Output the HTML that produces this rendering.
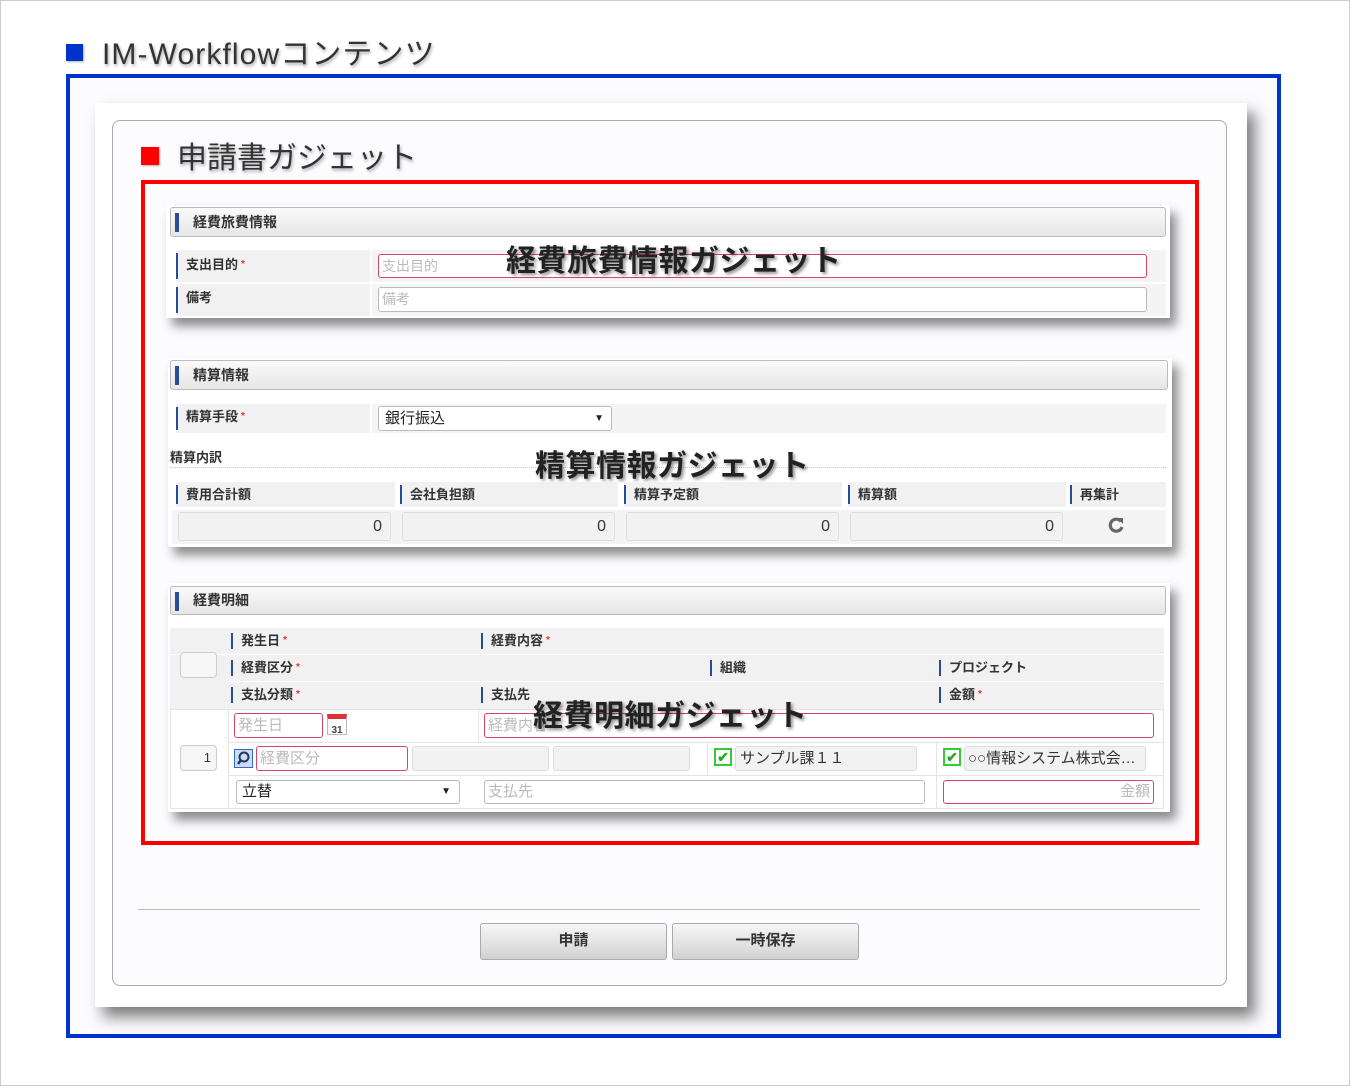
<!DOCTYPE html>
<html><head><meta charset="utf-8"><style>
*{box-sizing:border-box;margin:0;padding:0}
body{width:1350px;height:1086px;position:relative;background:#fff;font-family:"Liberation Sans","Noto Sans CJK JP",sans-serif;color:#333;overflow:hidden}
.a{position:absolute}
.hd{position:absolute;border:1px solid #bbb;border-radius:3px;background:linear-gradient(#fafafa,#e6e6e6);font-size:14px;font-weight:bold;color:#333;line-height:28px;padding-left:22px}
.hd:before{content:"";position:absolute;left:4px;top:5px;width:4px;height:19px;background:#2a4a9a}
.lb{position:absolute;background:#f1f1f1;font-size:13px;font-weight:bold;color:#333;padding-left:10px}
.lb:before{content:"";position:absolute;left:0;top:3px;bottom:3px;width:2px;background:#2a4a9a}
.req{color:#e33;font-size:10px;vertical-align:top;margin-left:3px}
.cell{position:absolute;background:#f4f4f4}
.in{position:absolute;background:#fff;border:1px solid #bbb;border-radius:3px;font-size:14px;color:#bbb;padding-left:3px}
.rq{border-color:#d9436a}
.ro{position:absolute;background:#f2f2f2;border:1px solid #ddd;border-radius:3px;font-size:16px;color:#333;text-align:right;padding-right:8px}
.big{position:absolute;font-size:30px;font-weight:bold;color:#222;text-shadow:2px 2px 3px rgba(0,0,0,.45);white-space:nowrap;letter-spacing:0.5px}
.gad{position:absolute;background:#fff;box-shadow:6px 8px 10px rgba(0,0,0,.45)}
.btn{position:absolute;border:1px solid #aaa;border-radius:3px;background:linear-gradient(#f6f6f6,#d2d2d2);font-size:15px;font-weight:bold;text-align:center;line-height:34px;color:#333}
.ck{display:inline-block;width:18px;height:18px;border:2px solid #3c3;background:#fff;color:#2a2;font-size:14px;line-height:14px;text-align:center;vertical-align:middle;font-weight:bold}
</style></head><body>
<div class="a" style="left:0;top:0;width:1350px;height:1086px;border:1px solid #ccc"></div>
<div class="a" style="left:66px;top:44px;width:17px;height:17px;background:#0033cc;box-shadow:1px 1px 2px rgba(0,0,0,.3)"></div>
<div class="a" style="left:102px;top:29px;font-size:30px;color:#333;text-shadow:1px 2px 3px rgba(0,0,0,.35);white-space:nowrap;letter-spacing:1.1px">IM-Workflowコンテンツ</div>
<div class="a" style="left:66px;top:74px;width:1215px;height:964px;border:4px solid #0033cc;background:#fcfcfe"></div>
<div class="a" style="left:95px;top:103px;width:1152px;height:904px;background:#fff;box-shadow:8px 10px 14px rgba(0,0,0,.5)"></div>
<div class="a" style="left:112px;top:120px;width:1115px;height:866px;border:1px solid #aaa;border-radius:8px;background:#fcfcfe"></div>
<div class="a" style="left:141px;top:147px;width:18px;height:18px;background:#f00;box-shadow:1px 1px 2px rgba(0,0,0,.3)"></div>
<div class="a" style="left:177px;top:133px;font-size:30px;color:#333;text-shadow:1px 2px 3px rgba(0,0,0,.35);white-space:nowrap">申請書ガジェット</div>
<div class="a" style="left:141px;top:180px;width:1058px;height:665px;border:4px solid #f00"></div>

<!-- gadget 1 -->
<div class="gad" style="left:166px;top:205px;width:1004px;height:113px"></div>
<div class="hd" style="left:170px;top:207px;width:996px;height:30px">経費旅費情報</div>
<div class="lb" style="left:176px;top:250px;width:194px;height:32px;line-height:30px">支出目的<span class="req">*</span></div>
<div class="cell" style="left:372px;top:250px;width:794px;height:32px"></div>
<div class="in rq" style="left:378px;top:254px;width:769px;height:24px;line-height:22px">支出目的</div>
<div class="lb" style="left:176px;top:284px;width:194px;height:32px;line-height:28px">備考</div>
<div class="cell" style="left:372px;top:284px;width:794px;height:32px"></div>
<div class="in" style="left:378px;top:287px;width:769px;height:25px;line-height:22px">備考</div>
<div class="big" style="left:506px;top:236px">経費旅費情報ガジェット</div>

<!-- gadget 2 -->
<div class="gad" style="left:168px;top:358px;width:1004px;height:189px"></div>
<div class="hd" style="left:170px;top:360px;width:998px;height:30px">精算情報</div>
<div class="lb" style="left:176px;top:404px;width:194px;height:29px;line-height:26px">精算手段<span class="req">*</span></div>
<div class="cell" style="left:372px;top:404px;width:794px;height:29px"></div>
<div class="in" style="left:378px;top:406px;width:234px;height:25px;line-height:23px;color:#222;font-size:15px;padding-left:6px">銀行振込<span style="position:absolute;right:7px;font-size:10px">▼</span></div>
<div class="a" style="left:170px;top:447px;font-size:13px;font-weight:bold">精算内訳</div>
<div class="a" style="left:170px;top:467px;width:996px;border-top:1px dotted #ccc"></div>
<div class="big" style="left:535px;top:441px">精算情報ガジェット</div>
<div class="lb" style="left:176px;top:482px;width:219px;height:25px;line-height:25px">費用合計額</div>
<div class="lb" style="left:400px;top:482px;width:218px;height:25px;line-height:25px">会社負担額</div>
<div class="lb" style="left:624px;top:482px;width:218px;height:25px;line-height:25px">精算予定額</div>
<div class="lb" style="left:848px;top:482px;width:218px;height:25px;line-height:25px">精算額</div>
<div class="lb" style="left:1070px;top:482px;width:96px;height:25px;line-height:25px">再集計</div>
<div class="cell" style="left:172px;top:510px;width:994px;height:34px"></div>
<div class="ro" style="left:178px;top:512px;width:213px;height:29px;line-height:27px">0</div>
<div class="ro" style="left:402px;top:512px;width:213px;height:29px;line-height:27px">0</div>
<div class="ro" style="left:626px;top:512px;width:213px;height:29px;line-height:27px">0</div>
<div class="ro" style="left:850px;top:512px;width:213px;height:29px;line-height:27px">0</div>
<svg class="a" style="left:1107px;top:516px" width="18" height="18" viewBox="0 0 18 18"><path d="M14 5.5A6 6 0 1 0 15 11" fill="none" stroke="#666" stroke-width="3.2"/><path d="M10 2l6 0l0 6z" fill="#666"/></svg>

<!-- gadget 3 -->
<div class="gad" style="left:168px;top:583px;width:1002px;height:229px"></div>
<div class="hd" style="left:170px;top:586px;width:996px;height:29px;line-height:27px">経費明細</div>
<div class="cell" style="left:170px;top:628px;width:994px;height:81px;background:#f1f1f1"></div>
<div class="a" style="left:170px;top:654px;width:994px;border-top:1px solid #fff"></div>
<div class="a" style="left:228px;top:681px;width:936px;border-top:1px solid #fff"></div>
<div class="a" style="left:180px;top:652px;width:37px;height:26px;border:1px solid #ccc;border-radius:4px;background:#f6f6f6"></div>
<div class="lb" style="left:231px;top:630px;width:240px;height:22px;line-height:22px;background:none">発生日<span class="req">*</span></div>
<div class="lb" style="left:481px;top:630px;width:240px;height:22px;line-height:22px;background:none">経費内容<span class="req">*</span></div>
<div class="lb" style="left:231px;top:657px;width:240px;height:22px;line-height:22px;background:none">経費区分<span class="req">*</span></div>
<div class="lb" style="left:710px;top:657px;width:200px;height:22px;line-height:22px;background:none">組織</div>
<div class="lb" style="left:939px;top:657px;width:200px;height:22px;line-height:22px;background:none">プロジェクト</div>
<div class="lb" style="left:231px;top:684px;width:240px;height:22px;line-height:22px;background:none">支払分類<span class="req">*</span></div>
<div class="lb" style="left:481px;top:684px;width:240px;height:22px;line-height:22px;background:none">支払先</div>
<div class="lb" style="left:939px;top:684px;width:200px;height:22px;line-height:22px;background:none">金額<span class="req">*</span></div>
<div class="a" style="left:170px;top:709px;width:994px;height:100px;border:1px solid #e4e4e4;background:#fff"></div>
<div class="a" style="left:228px;top:709px;height:100px;border-left:1px solid #e4e4e4"></div>
<div class="a" style="left:478px;top:709px;height:34px;border-left:1px solid #e4e4e4"></div>
<div class="a" style="left:228px;top:742px;width:936px;border-top:1px solid #e4e4e4"></div>
<div class="a" style="left:228px;top:775px;width:936px;border-top:1px solid #e4e4e4"></div>
<div class="a" style="left:180px;top:745px;width:37px;height:26px;border:1px solid #ccc;border-radius:4px;background:#f6f6f6;font-size:13px;text-align:right;padding-right:5px;line-height:24px">1</div>
<div class="in rq" style="left:234px;top:713px;width:89px;height:25px;line-height:23px;font-size:15px">発生日</div>
<div class="a" style="left:327px;top:714px;width:20px;height:21px;border:1px solid #bbb;background:#fff;font-size:10px;font-weight:bold;text-align:center;line-height:24px;color:#444;border-top:5px solid #d33">31</div>
<div class="in rq" style="left:484px;top:713px;width:670px;height:25px;line-height:23px;font-size:15px">経費内容</div>
<div class="a" style="left:234px;top:749px;width:19px;height:19px;border:1px solid #36c;background:#cde;"><svg width="17" height="17" viewBox="0 0 17 17"><circle cx="9" cy="7" r="4.5" fill="none" stroke="#236" stroke-width="2"/><path d="M6 10l-3 4" stroke="#236" stroke-width="2.5"/></svg></div>
<div class="in rq" style="left:256px;top:746px;width:152px;height:25px;line-height:23px;font-size:15px">経費区分</div>
<div class="ro" style="left:412px;top:746px;width:137px;height:25px"></div>
<div class="ro" style="left:553px;top:746px;width:137px;height:25px"></div>
<div class="a" style="left:707px;top:743px;height:33px;border-left:1px solid #e4e4e4"></div>
<div class="a" style="left:936px;top:743px;height:66px;border-left:1px solid #e4e4e4"></div>
<div class="a" style="left:714px;top:748px"><span class="ck">✔</span></div>
<div class="ro" style="left:735px;top:746px;width:182px;height:25px;text-align:left;padding-left:4px;line-height:23px;font-size:15px">サンプル課１１</div>
<div class="a" style="left:943px;top:748px"><span class="ck">✔</span></div>
<div class="ro" style="left:964px;top:746px;width:182px;height:25px;text-align:left;padding-left:3px;line-height:23px;font-size:15px;white-space:nowrap;overflow:hidden">○○情報システム株式会…</div>
<div class="in" style="left:236px;top:780px;width:224px;height:24px;line-height:22px;color:#222;font-size:15px;padding-left:5px">立替<span style="position:absolute;right:8px;font-size:10px">▼</span></div>
<div class="in" style="left:484px;top:780px;width:441px;height:24px;line-height:22px;font-size:15px">支払先</div>
<div class="in rq" style="left:943px;top:780px;width:211px;height:24px;line-height:22px;text-align:right;padding-right:3px;font-size:15px">金額</div>
<div class="big" style="left:533px;top:691px">経費明細ガジェット</div>

<div class="a" style="left:138px;top:909px;width:1062px;border-top:1px solid #bbb"></div>
<div class="btn" style="left:480px;top:923px;width:187px;height:37px">申請</div>
<div class="btn" style="left:672px;top:923px;width:187px;height:37px">一時保存</div>
</body></html>
